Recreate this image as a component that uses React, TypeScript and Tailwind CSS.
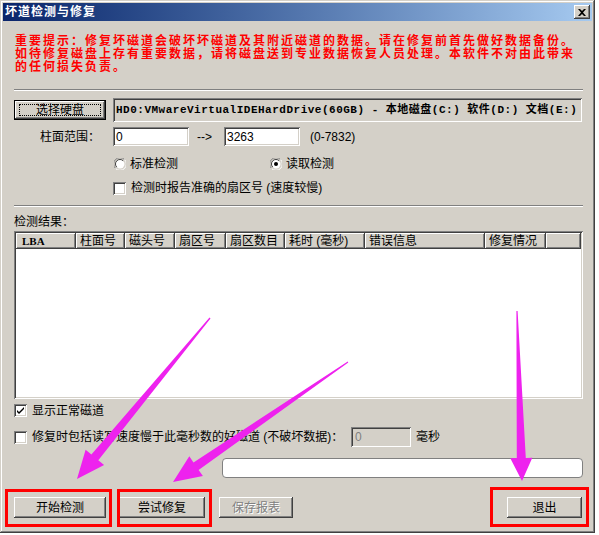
import React from "react";

const raised =
  "bg-[#d4d0c8] shadow-[inset_-1px_-1px_#404040,inset_1px_1px_#ffffff,inset_-2px_-2px_#808080]";
const sunken =
  "shadow-[inset_1px_1px_#808080,inset_-1px_-1px_#ffffff,inset_2px_2px_#404040,inset_-2px_-2px_#d4d0c8]";

const columns = [
  { label: "LBA", w: "w-[60px]", lba: true },
  { label: "柱面号", w: "w-[49px]" },
  { label: "磁头号", w: "w-[50px]" },
  { label: "扇区号", w: "w-[51px]" },
  { label: "扇区数目", w: "w-[59px]" },
  { label: "耗时 (毫秒)", w: "w-[80px]" },
  { label: "错误信息", w: "w-[120px]" },
  { label: "修复情况", w: "w-[61px]" },
];

function arrow(tx: number, ty: number, px: number, py: number, L = 27, W = 12, s = 4.5, t = 0.6) {
  const dx = px - tx;
  const dy = py - ty;
  const len = Math.hypot(dx, dy);
  const ux = dx / len;
  const uy = dy / len;
  const nx = -uy;
  const ny = ux;
  const bx = px - ux * L;
  const by = py - uy * L;
  const pts = [
    [tx + nx * t, ty + ny * t],
    [bx + nx * s, by + ny * s],
    [bx + nx * W, by + ny * W],
    [px, py],
    [bx - nx * W, by - ny * W],
    [bx - nx * s, by - ny * s],
    [tx - nx * t, ty - ny * t],
  ];
  return pts.map((p) => p.map((v) => v.toFixed(1)).join(",")).join(" ");
}

function Check({ checked }: { checked?: boolean }) {
  return (
    <span className={`relative block h-[13px] w-[13px] shrink-0 bg-white ${sunken}`}>
      {checked && (
        <svg className="absolute left-0 top-0" width="13" height="13" viewBox="0 0 13 13">
          <path d="M3 6 L5 8 L10 3 L10 5 L5 10 L3 8 Z" fill="#000" />
        </svg>
      )}
    </span>
  );
}

function Radio({ on }: { on?: boolean }) {
  return (
    <svg width="12" height="12" viewBox="0 0 12 12" className="shrink-0">
      <path d="M10.5 1.5 A6 6 0 0 0 1.5 10.5" stroke="#808080" strokeWidth="1" fill="none" />
      <path d="M1.5 10.5 A6 6 0 0 0 10.5 1.5" stroke="#ffffff" strokeWidth="1" fill="none" />
      <circle cx="6" cy="6" r="4.5" fill="#fff" />
      <path d="M9.2 2.8 A4.5 4.5 0 0 0 2.8 9.2" stroke="#404040" strokeWidth="1" fill="none" />
      {on && <circle cx="6" cy="6" r="2" fill="#000" />}
    </svg>
  );
}

function Button({ children, className = "", disabled }: { children: React.ReactNode; className?: string; disabled?: boolean }) {
  return (
    <div className={`flex h-[21px] items-center justify-center ${raised} ${className}`}>
      <span className={disabled ? "text-[#808080] [text-shadow:1px_1px_#ffffff]" : "text-black"}>{children}</span>
    </div>
  );
}

export default function App() {
  return (
    <div className="relative h-[535px] w-[599px] bg-white font-['Liberation_Sans','Noto_Sans_CJK_SC',sans-serif] text-[12px] leading-[14px]">
      <div className="flex h-[533px] w-[595px] flex-col bg-[#d4d0c8] p-[3px] shadow-[inset_-1px_-1px_#404040,inset_1px_1px_#d4d0c8,inset_-2px_-2px_#808080,inset_2px_2px_#ffffff]">
        {/* title bar */}
        <div className="flex h-[18px] items-center justify-between bg-linear-to-r from-[#0a246a] to-[#a6caf0] pl-[2px] pr-[2px]">
          <span className="text-[12px] font-bold tracking-[1px] text-white">坏道检测与修复</span>
          <div className={`flex h-[14px] w-[16px] items-center justify-center ${raised}`}>
            <svg width="8" height="7" viewBox="0 0 8 7">
              <path d="M0 0 L2 0 L4 2 L6 0 L8 0 L5 3.5 L8 7 L6 7 L4 5 L2 7 L0 7 L3 3.5 Z" fill="#000" />
            </svg>
          </div>
        </div>

        <div className="flex flex-1 flex-col pl-[11px] pr-[9px]">
          {/* warning */}
          <div className="pl-[1px] pt-[14px] text-[12px] font-bold leading-[13px] tracking-[2px] text-[#ff0000]">
            <div className="whitespace-nowrap">重要提示：修复坏磁道会破坏坏磁道及其附近磁道的数据。请在修复前首先做好数据备份。</div>
            <div className="whitespace-nowrap">如待修复磁盘上存有重要数据，请将磁盘送到专业数据恢复人员处理。本软件不对由此带来</div>
            <div className="whitespace-nowrap">的任何损失负责。</div>
          </div>

          <div className="mt-[15px] h-[2px] border-b border-t border-b-white border-t-[#808080]" />

          {/* drive row */}
          <div className="mt-[7px] flex h-[24px] items-center">
            <div className="flex h-[20px] w-[92px] items-center justify-center border border-black bg-[#d4d0c8] shadow-[inset_-1px_-1px_#404040,inset_1px_1px_#ffffff,inset_-2px_-2px_#808080]">
              <span className="flex h-[12px] w-[82px] items-center justify-center border border-dotted border-black">选择硬盘</span>
            </div>
            <div className={`ml-[7px] mr-[1px] flex h-full flex-1 items-center overflow-hidden whitespace-nowrap pl-[3px] ${sunken}`}>
              <span className="font-['Liberation_Mono','Noto_Sans_CJK_SC',monospace] text-[11px] font-bold tracking-[0.5px]">
                HD0:VMwareVirtualIDEHardDrive(60GB) - 本地磁盘(C:) 软件(D:) 文档(E:)
              </span>
            </div>
          </div>

          {/* cylinder range */}
          <div className="mt-[5px] flex h-[19px] items-center">
            <span className="w-[99px] pl-[26px]">柱面范围：</span>
            <div className={`flex h-full w-[76px] items-center bg-white pl-[3px] ${sunken}`}>0</div>
            <span className="ml-[8px] w-[27px]">--&gt;</span>
            <div className={`flex h-full w-[76px] items-center bg-white pl-[3px] ${sunken}`}>3263</div>
            <span className="ml-[10px]">(0-7832)</span>
          </div>

          {/* radios */}
          <div className="mt-[9px] flex h-[18px] items-center">
            <div className="ml-[100px] flex w-[156px] items-center">
              <Radio />
              <span className="ml-[4px]">标准检测</span>
            </div>
            <div className="flex items-center">
              <Radio on />
              <span className="ml-[4px]">读取检测</span>
            </div>
          </div>

          <div className="mt-[6px] flex h-[18px] items-center">
            <div className="ml-[99px]">
              <Check />
            </div>
            <span className="ml-[5px]">检测时报告准确的扇区号 (速度较慢)</span>
          </div>

          <div className="mt-[8px] h-[2px] border-b border-t border-b-white border-t-[#808080]" />

          <div className="mt-[8px] h-[14px]">检测结果：</div>

          {/* list view */}
          <div className={`mt-[2px] h-[168px] bg-white p-[2px] ${sunken}`}>
            <div className="flex h-[16px]">
              {columns.map((c) => (
                <div key={c.label} className={`${c.w} flex shrink-0 items-center ${raised} ${c.lba ? "pl-[6px]" : "pl-[4px]"}`}>
                  {c.lba ? (
                    <span className="font-['Liberation_Serif',serif] text-[11px] font-bold">LBA</span>
                  ) : (
                    <span>{c.label}</span>
                  )}
                </div>
              ))}
              <div className={`flex-1 ${raised}`} />
            </div>
          </div>

          {/* options */}
          <div className="mt-[3px] flex h-[17px] items-center">
            <Check checked />
            <span className="ml-[5px]">显示正常磁道</span>
          </div>

          <div className="mt-[8px] flex h-[20px] items-center">
            <Check />
            <span className="ml-[5px] w-[319px] whitespace-nowrap">修复时包括读写速度慢于此毫秒数的好磁道 (不破坏数据)：</span>
            <div className={`flex h-full w-[60px] items-center bg-[#d4d0c8] pl-[4px] text-[#808080] ${sunken}`}>0</div>
            <span className="ml-[5px]">毫秒</span>
          </div>

          {/* progress */}
          <div className="ml-[208px] mt-[11px] h-[20px] rounded-[4px] border border-[#808080] bg-white" />

          {/* buttons */}
          <div className="mt-[19px] flex items-center">
            <Button className="w-[92px]">开始检测</Button>
            <Button className="ml-[13px] w-[86px]">尝试修复</Button>
            <Button className="ml-[14px] w-[74px]" disabled>
              保存报表
            </Button>
            <Button className="ml-auto mr-[1px] w-[75px]">退出</Button>
          </div>
        </div>
      </div>

      {/* annotations */}
      <svg className="pointer-events-none absolute left-0 top-0" width="599" height="535" viewBox="0 0 599 535">
        <rect x="6.5" y="490.5" width="104" height="35" fill="none" stroke="#ff0000" strokeWidth="3" />
        <rect x="118.5" y="490.5" width="92" height="35" fill="none" stroke="#ff0000" strokeWidth="3" />
        <rect x="491.5" y="488.5" width="96" height="37" fill="none" stroke="#ff0000" strokeWidth="3" />
        <polygon points={arrow(210, 318, 77, 479, 28, 12, 4.5)} fill="#ee22ee" />
        <polygon points={arrow(348, 362, 173, 482, 28, 12, 4.5)} fill="#ee22ee" />
        <polygon points={arrow(517, 311, 522, 481, 23, 11, 4.5)} fill="#ee22ee" />
      </svg>
    </div>
  );
}
